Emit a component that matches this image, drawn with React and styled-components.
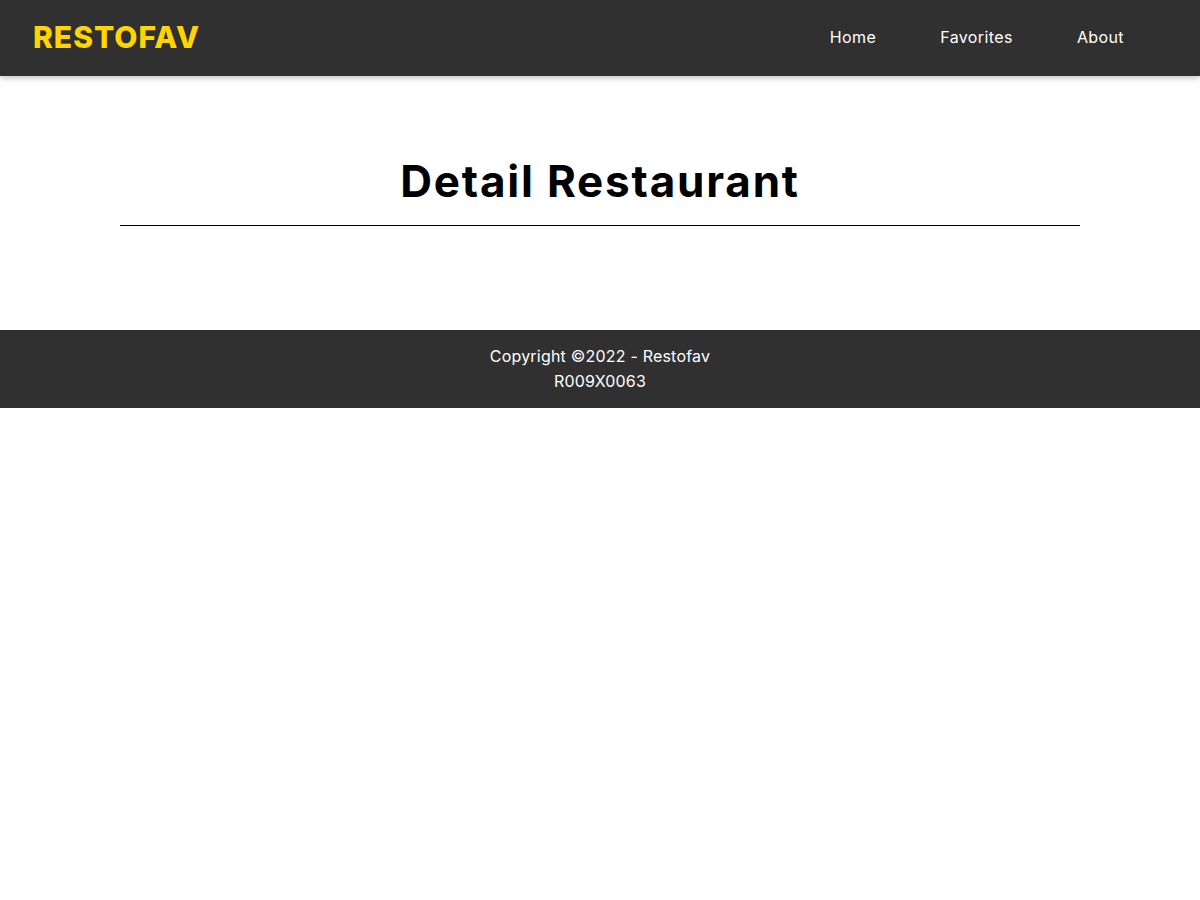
import React from "react";
import styled, { createGlobalStyle } from "styled-components";

const GlobalStyle = createGlobalStyle`
  * {
    box-sizing: border-box;
  }
  body {
    margin: 0;
    font-family: "Inter", "Open Sans", sans-serif;
    background: #fff;
  }
`;

const Header = styled.header`
  height: 76px;
  background-color: #303030;
  display: flex;
  align-items: center;
  justify-content: space-between;
  padding: 0 44px 3px 33px;
  box-shadow: 0 2px 6px rgba(0, 0, 0, 0.25);
  position: relative;
  z-index: 2;
`;
const Logo = styled.a`
  color: #ffd500;
  font-size: 30px;
  font-weight: 800;
  text-decoration: none;
  letter-spacing: 1px;
`;
const Nav = styled.nav`
  display: flex;
  align-items: center;
`;
const NavLink = styled.a`
  color: #fff;
  font-size: 16px;
  font-weight: 400;
  letter-spacing: 0.4px;
  text-decoration: none;
  padding: 0 32px;
`;

const Main = styled.main`
  padding: 79px 0 0;
  min-height: 254px;
`;
const Title = styled.h1`
  margin: 0 auto;
  width: 80%;
  text-align: center;
  font-size: 44px;
  font-weight: 700;
  letter-spacing: 1.8px;
  line-height: 1.2;
  color: #000;
  padding-bottom: 17px;
  border-bottom: 1px solid #000;
`;

const Footer = styled.footer`
  background-color: #303030;
  color: #fff;
  text-align: center;
  padding: 14px 0 14px;
  font-size: 16px;
  letter-spacing: 0.2px;
  line-height: 25px;
`;

const App = () => {
  return (
    <>
      <GlobalStyle />
      <Header>
        <Logo href="#">RESTOFAV</Logo>
        <Nav>
          <NavLink href="#">Home</NavLink>
          <NavLink href="#">Favorites</NavLink>
          <NavLink href="#">About</NavLink>
        </Nav>
      </Header>
      <Main>
        <Title>Detail Restaurant</Title>
      </Main>
      <Footer>
        <div>Copyright ©2022 - Restofav</div>
        <div>R009X0063</div>
      </Footer>
    </>
  );
};

export default App;
